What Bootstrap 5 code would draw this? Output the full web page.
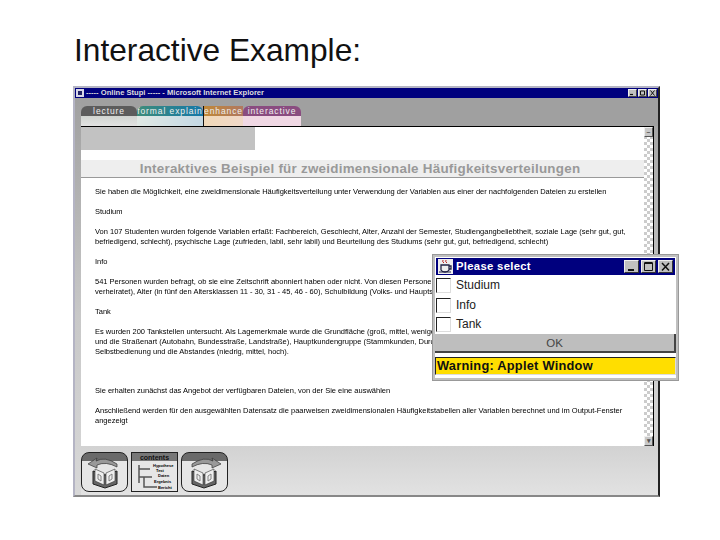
<!DOCTYPE html>
<html lang="de"><head><meta charset="utf-8"><title>Interactive Example</title>
<link href="https://cdn.jsdelivr.net/npm/bootstrap@5.3.0/dist/css/bootstrap.min.css" rel="stylesheet">
<style>
html,body{margin:0;background:#fff;font-family:"Liberation Sans",Arial,sans-serif;}
.slide{width:720px;height:540px;padding:33px 0 0 74px;overflow:hidden;position:relative;}
.slide-title{font:400 31.7px/34px "Liberation Sans",sans-serif;color:#111;margin:0 0 19px;}
.ie-win{margin-left:-1px;width:587px;height:411px;border:2px solid #b4b4c4;border-right:2px solid #222;border-bottom:2px solid #888;background:#a0a0a0;}
.ie-title{height:10px;background:#00007e;color:#ddd;font:700 7.6px/10px "Liberation Sans",sans-serif;padding-left:11px;}
.ie-ico{width:8px;height:8px;left:1px;top:1px;}
.ctl{width:9px;height:8px;background:#c0c0c0;border:1px solid #eee;border-right-color:#444;border-bottom-color:#444;color:#111;margin-top:1px;margin-right:1px;}
.ctl svg{display:block;width:7px;height:6px;}
.ie-body{height:397px;}
.side{width:6px;flex:none;background:linear-gradient(#a0a0a0,#c8c8c8 55%,#d8d8d8);}
.inner{width:577px;flex:none;background:linear-gradient(#a0a0a0,#c8c8c8 55%,#d8d8d8);}
.tabbar{height:28px;padding-top:8px;background:#a0a0a0;}
.tabx{height:20px;overflow:hidden;font:400 8.5px/10px "Liberation Sans",sans-serif;color:#eee;letter-spacing:.9px;text-align:center;white-space:nowrap;border-radius:6px 6px 0 0;flex:none;}
.t1{width:56px;background:linear-gradient(#5c5c5c 50%,#d0d4d0 50%,#e2e2e2);}
.t2{width:66px;background:linear-gradient(90deg,#3d8c7a,#1678a8) top/100% 50% no-repeat,linear-gradient(90deg,#e0e8e4,#c4d8e4) bottom/100% 50% no-repeat;}
.t3{width:40px;background:linear-gradient(90deg,#c08838,#b07860) top/100% 50% no-repeat,linear-gradient(90deg,#f0d8b8,#f0d8c8) bottom/100% 50% no-repeat;border-left:1px solid #111;border-radius:0;}
.t4{width:58px;background:linear-gradient(#8a4c80 50%,#f0d8e4 50%);}
.content{height:320px;width:573px;background:#fff;border-top:1px solid #000;}
.main-col{width:563px;flex:none;}
.graybox{width:174px;height:23px;background:#c2c2c2;margin-bottom:10px;}
.headband{height:18px;background:#eee;border-bottom:1px solid #999;text-align:center;font:700 13.4px/17px "Liberation Sans",sans-serif;color:#999;letter-spacing:.25px;padding-right:5px;margin-bottom:9px;white-space:nowrap;}
.txt{padding-left:14px;font:400 7.5px/10px "Liberation Sans",sans-serif;color:#000;white-space:nowrap;filter:blur(.35px);}
.txt p{margin:0;height:10px;}
.gap10{margin-top:10px!important;}
.gap29{margin-top:29px!important;}
.sbar{width:10px;flex:none;border-right:1px solid #000;background-color:#fff;background-image:conic-gradient(#ccc 25%,#fff 0 50%,#ccc 0 75%,#fff 0);background-size:6px 6px;}
.sbtn{height:10px;background:#c8c8c8;border:1px solid #eee;border-right-color:#555;border-bottom-color:#555;font:700 7px/7px "Liberation Sans",sans-serif;text-align:center;color:#555;}
.bottom{height:49px;background:linear-gradient(#d2d2d2,#e2e2e2);padding:6px 0 0 0;gap:3px;}
.navb{width:47px;height:40px;border:1px solid #222;background:linear-gradient(#6a6a6a 22%,#e6e6e6 22%);}
.navb svg{display:block;}
.rnd{border-radius:8px;overflow:hidden;}
.navc{font:700 7px/9px "Liberation Sans",sans-serif;color:#111;text-align:center;background:linear-gradient(#777 22%,#e6e6e6 22%);}
.dlg{position:absolute;left:433px;top:255px;width:245px;height:125px;background:#fff;border:2px solid #c0c0c0;outline:1px solid #999;font-family:"Liberation Sans",sans-serif;}
.dlg-title{height:17px;background:#00007e;color:#fff;font:700 11.3px/17px "Liberation Sans",sans-serif;letter-spacing:.3px;padding:0 2px;gap:2px;margin:1px 1px 0;}
.dlg-ico{margin-right:1px;}
.dctl{width:15px;height:13px;flex:none;background:#c0c0c0;border:1px solid #eee;border-right-color:#333;border-bottom-color:#333;}
.dctl svg{display:block;width:13px;height:11px;}
.rows{margin-top:1px;}
.chk-row{height:19.4px;font-size:12px;line-height:19px;color:#222;padding-left:1px;gap:5px;}
.chk{width:15px;height:15px;background:#fff;border:1px solid #ddd;border-left:1.5px solid #222;border-top:1.5px solid #222;}
.okb{height:19px;background:#bebebe;border-right:2px solid #444;border-bottom:2px solid #444;text-align:center;font-size:11.5px;line-height:18px;color:#444;}
.warn{height:18px;background:#ffde00;border:1px solid #222;border-right-color:#ddd;border-bottom-color:#ddd;font:700 12.8px/16px "Liberation Sans",sans-serif;color:#111;margin-top:4px;padding-left:1px;letter-spacing:.25px;}
</style></head><body>
<div class="slide">
<h1 class="slide-title">Interactive Example:</h1>
<div class="ie-win">
 <div class="ie-title d-flex justify-content-between position-relative">
  <svg class="ie-ico position-absolute" viewBox="0 0 8 8"><rect width="8" height="8" fill="#d8d8e8"/><path d="M2 2h4v4H2z" fill="#226"/></svg>
  <span>-----  Online Stupi  -----  -  Microsoft Internet Explorer</span>
  <div class="d-flex">
   <div class="ctl"><svg viewBox="0 0 7 6"><path d="M1 4.5h3" stroke="#111" stroke-width="1.2"/></svg></div>
   <div class="ctl"><svg viewBox="0 0 7 6"><path d="M1.5 1h4v4h-4z" fill="none" stroke="#111"/></svg></div>
   <div class="ctl"><svg viewBox="0 0 7 6"><path d="M1.5 .5l4 5M5.5 .5l-4 5" stroke="#111"/></svg></div>
  </div>
 </div>
 <div class="ie-body d-flex">
  <div class="side"></div>
  <div class="inner">
   <div class="tabbar d-flex">
    <div class="tabx t1">lecture</div><div class="tabx t2">formal explain</div><div class="tabx t3">enhance</div><div class="tabx t4">interactive</div>
   </div>
   <div class="content d-flex">
    <div class="main-col">
     <div class="graybox"></div>
     <div class="headband">Interaktives Beispiel für zweidimensionale Häufigkeitsverteilungen</div>
     <div class="txt">
      <p>Sie haben die Möglichkeit, eine zweidimensionale Häufigkeitsverteilung unter Verwendung der Variablen aus einer der nachfolgenden Dateien zu erstellen</p>
      <p class="gap10">Studium</p>
      <p class="gap10">Von 107 Studenten wurden folgende Variablen erfaßt: Fachbereich, Geschlecht, Alter, Anzahl der Semester, Studiengangbeliebtheit, soziale Lage (sehr gut, gut,</p>
      <p>befriedigend, schlecht), psychische Lage (zufrieden, labil, sehr labil) und Beurteilung des Studiums (sehr gut, gut, befriedigend, schlecht)</p>
      <p class="gap10">Info</p>
      <p class="gap10">541 Personen wurden befragt, ob sie eine Zeitschrift abonniert haben oder nicht. Von diesen Personen wurden</p>
      <p>verheiratet), Alter (in fünf den Altersklassen 11 - 30, 31 - 45, 46 - 60), Schulbildung (Volks- und Hauptschule</p>
      <p class="gap10">Tank</p>
      <p class="gap10">Es wurden 200 Tankstellen untersucht. Als Lagemerkmale wurde die Grundfläche (groß, mittel, weniger als</p>
      <p>und die Straßenart (Autobahn, Bundesstraße, Landstraße), Hauptkundengruppe (Stammkunden, Durchgangs-</p>
      <p>Selbstbedienung und die Abstandes (niedrig, mittel, hoch).</p>
      <p class="gap29">Sie erhalten zunächst das Angebot der verfügbaren Dateien, von der Sie eine auswählen</p>
      <p class="gap10">Anschließend werden für den ausgewählten Datensatz die paarweisen zweidimensionalen Häufigkeitstabellen aller Variablen berechnet und im Output-Fenster</p>
      <p>angezeigt</p>
     </div>
    </div>
    <div class="sbar d-flex flex-column justify-content-between"><div class="sbtn">–</div><div class="sbtn">▾</div></div>
   </div>
   <div class="bottom d-flex">
    <div class="navb rnd">
     <svg width="45" height="38" viewBox="0 0 45 38"><path d="M35 11Q23 3 14 8l1-3-9 6 9 4v-3q9-4 20 2z" fill="#999" stroke="#333" stroke-width=".7"/><path d="M11 18l12 4 12-4v13l-12 4-12-4z" fill="#666" stroke="#222"/><path d="M13 16l9 4v12l-9-4zM33 16l-9 4v12l9-4z" fill="#eee" stroke="#333" stroke-width=".6"/><path d="M16 21l3 2v5l-3-2zM30 21l-3 2v5l3-2z" fill="none" stroke="#777" stroke-width=".9"/></svg>
    </div>
    <div class="navb navc">contents
     <svg width="45" height="29" viewBox="0 0 45 29"><path d="M7 3v18M7 7h11M7 15h13M12 15v10h13" fill="none" stroke="#555" stroke-width="1.5"/><text x="21" y="5" font-size="4" font-weight="700" font-family="Liberation Sans">Hypothese</text><text x="24" y="10" font-size="4" font-weight="700" font-family="Liberation Sans">Test</text><text x="26" y="15" font-size="4" font-weight="700" font-family="Liberation Sans">Daten</text><text x="22" y="21" font-size="4" font-weight="700" font-family="Liberation Sans">Ergebnis</text><text x="26" y="27" font-size="4" font-weight="700" font-family="Liberation Sans">Bericht</text></svg>
    </div>
    <div class="navb rnd">
     <svg width="45" height="38" viewBox="0 0 45 38"><path d="M10 11Q22 3 31 8l-1-3 9 6-9 4v-3q-9-4-20 2z" fill="#999" stroke="#333" stroke-width=".7"/><path d="M10 18l12 4 12-4v13l-12 4-12-4z" fill="#666" stroke="#222"/><path d="M12 16l9 4v12l-9-4zM32 16l-9 4v12l9-4z" fill="#eee" stroke="#333" stroke-width=".6"/><path d="M15 21l3 2v5l-3-2zM29 21l-3 2v5l3-2z" fill="none" stroke="#777" stroke-width=".9"/></svg>
    </div>
   </div>
  </div>
 </div>
</div>
<div class="dlg">
 <div class="dlg-title d-flex align-items-center">
  <svg class="dlg-ico" width="15" height="15" viewBox="0 0 15 15"><rect width="15" height="15" fill="#eee"/><path d="M3 6h8v5q-1 2-4 2t-4-2zM11 7h2v3h-2" fill="none" stroke="#224" stroke-width="1.3"/><path d="M5 1q-1 2 1 3M8 1q-1 2 1 3" fill="none" stroke="#b22" stroke-width="1"/><path d="M1 13h12" stroke="#224"/></svg>
  <span class="flex-grow-1">Please select</span>
  <div class="dctl"><svg viewBox="0 0 13 11"><path d="M3 9h6" stroke="#111" stroke-width="2"/></svg></div>
  <div class="dctl"><svg viewBox="0 0 13 11"><path d="M2.5 2h8v7.5h-8z" fill="none" stroke="#111"/><path d="M2.5 2h8" stroke="#111" stroke-width="2"/></svg></div>
  <div class="dctl"><svg viewBox="0 0 13 11"><path d="M3 2l7 7.5M10 2l-7 7.5" stroke="#111" stroke-width="1.5"/></svg></div>
 </div>
 <div class="rows">
  <div class="chk-row d-flex align-items-center"><div class="chk"></div><span>Studium</span></div>
  <div class="chk-row d-flex align-items-center"><div class="chk"></div><span>Info</span></div>
  <div class="chk-row d-flex align-items-center"><div class="chk"></div><span>Tank</span></div>
 </div>
 <div class="okb">OK</div>
 <div class="warn">Warning: Applet Window</div>
</div>
</div>
</body></html>
